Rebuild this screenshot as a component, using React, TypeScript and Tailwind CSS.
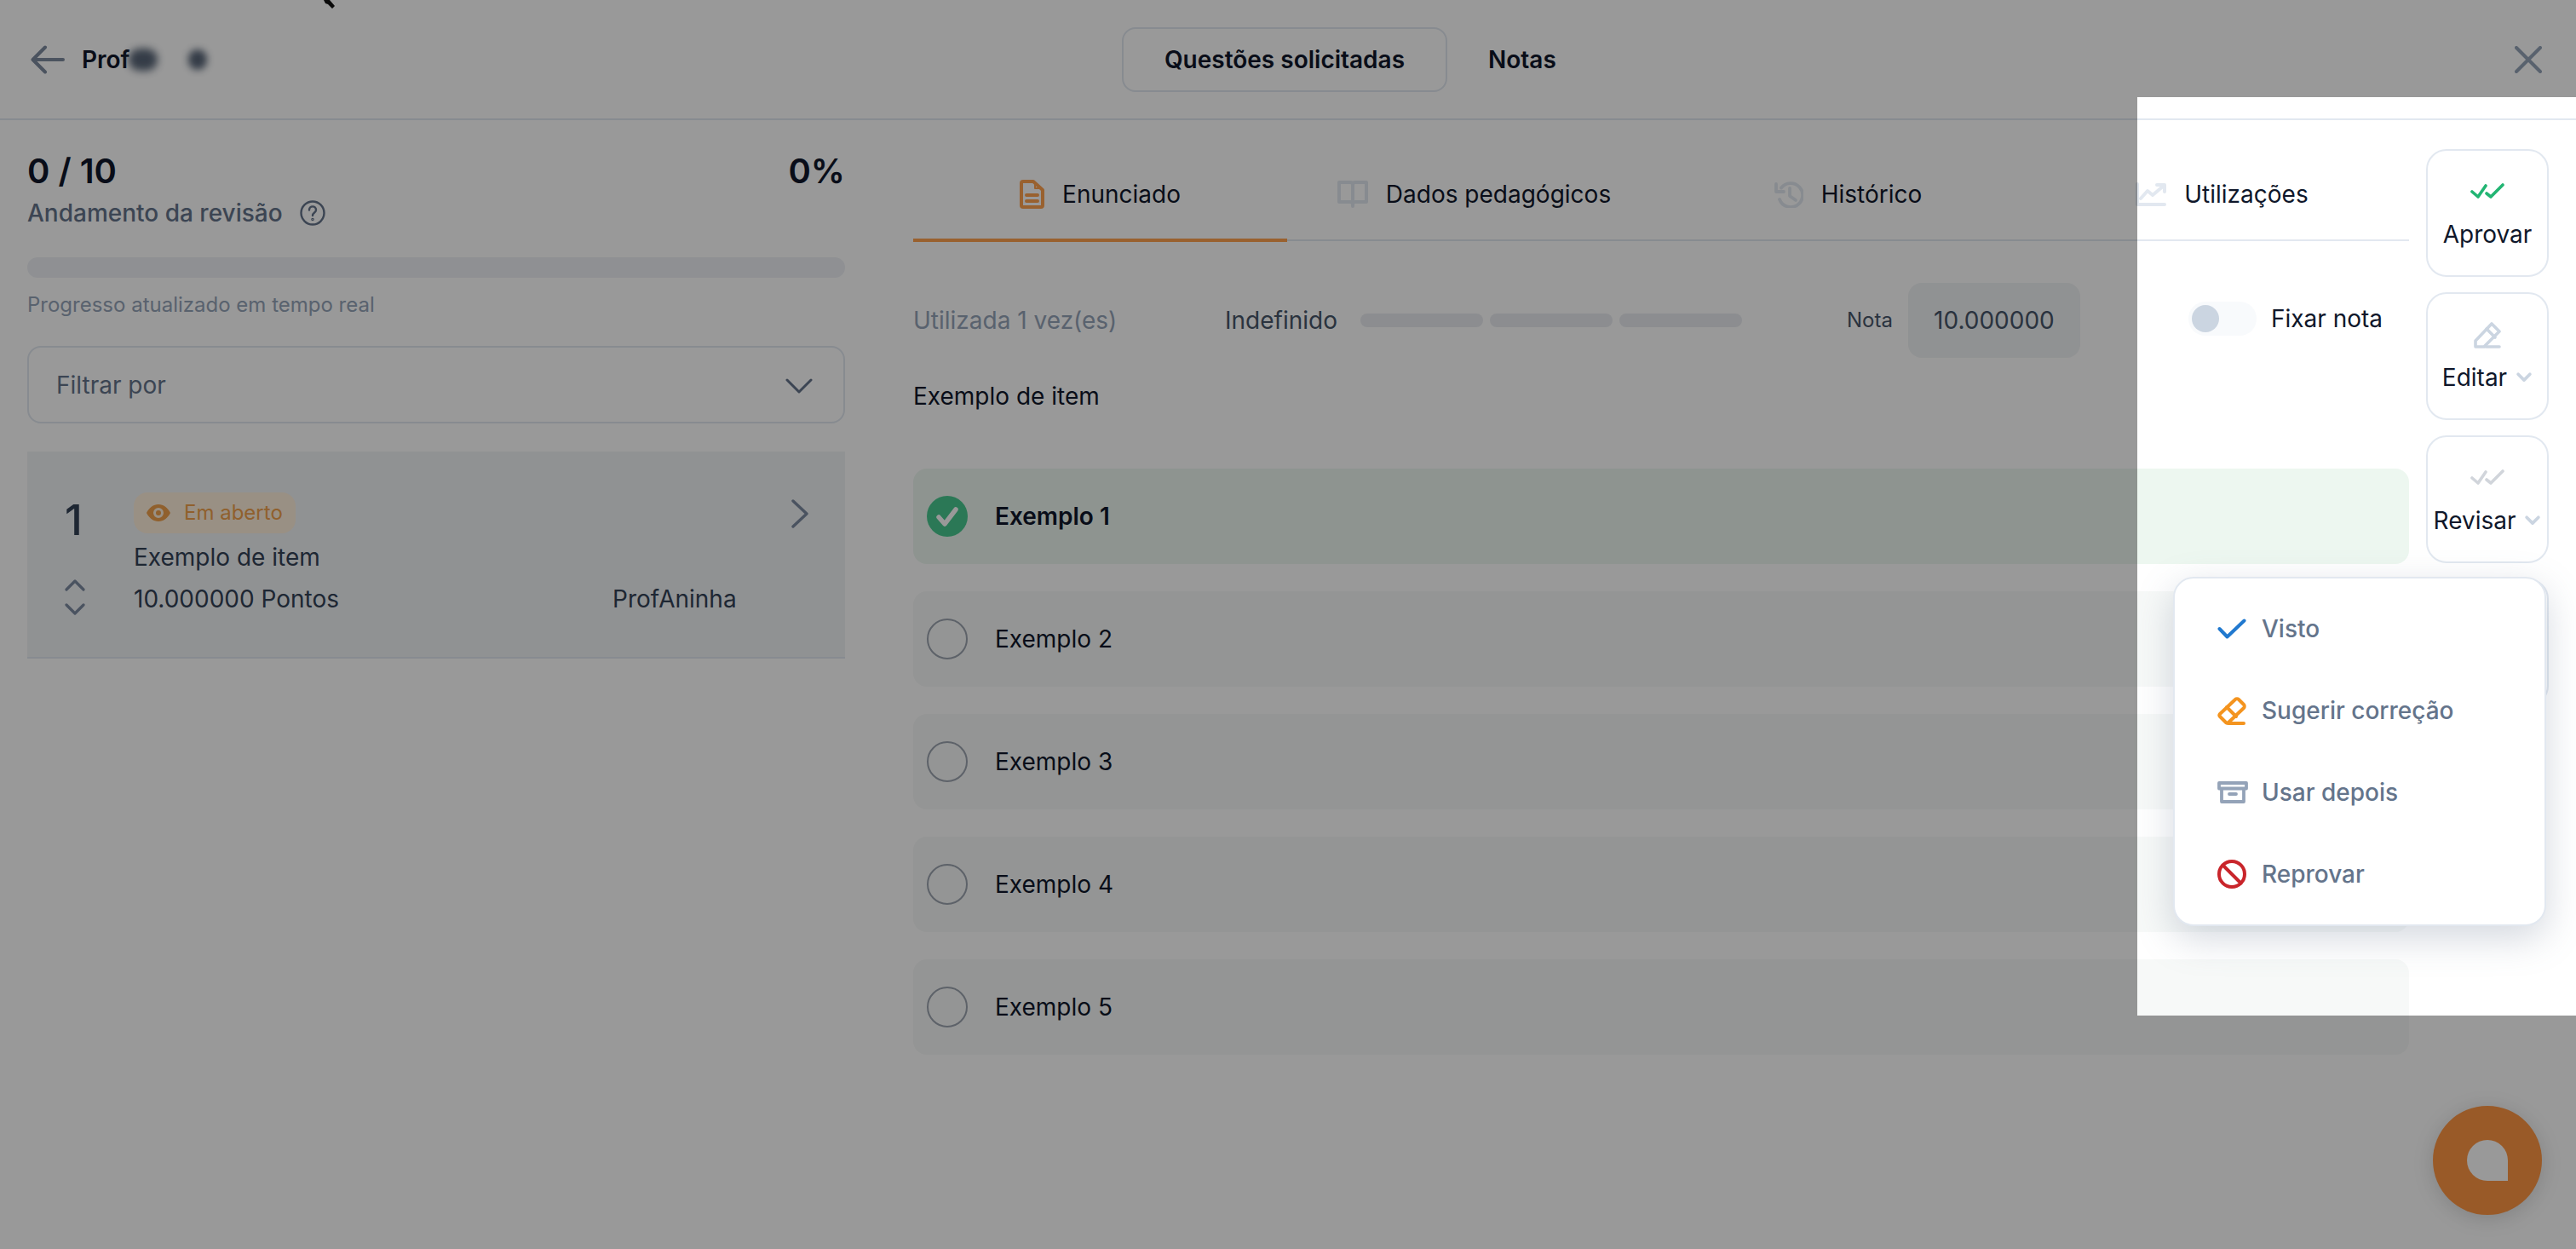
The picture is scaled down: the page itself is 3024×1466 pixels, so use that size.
import React from "react";

function Back() {
  return (
    <svg width="40" height="34" viewBox="0 0 40 34" fill="none" stroke="#7d8a9e" strokeWidth="4" strokeLinecap="round" strokeLinejoin="round">
      <path d="M17 2.5 2.5 17 17 31.5M2.5 17H38" />
    </svg>
  );
}
function Close() {
  return (
    <svg width="32" height="32" viewBox="0 0 32 32" fill="none" stroke="#94a3b8" strokeWidth="4" strokeLinecap="round">
      <path d="M2 2l28 28M30 2 2 30" />
    </svg>
  );
}
function Chevron({ d, size = 32, color = "#94a3b8", w = 3.5 }: { d: string; size?: number; color?: string; w?: number }) {
  return (
    <svg width={size} height={size} viewBox="0 0 32 32" fill="none" stroke={color} strokeWidth={w} strokeLinecap="round" strokeLinejoin="round">
      <path d={d} />
    </svg>
  );
}
function DoubleCheck({ color }: { color: string }) {
  return (
    <svg width="40" height="20" viewBox="0 0 40 20" fill="none" stroke={color} strokeWidth="3.6" strokeLinecap="round" strokeLinejoin="round">
      <path d="M2 10l7 6 9-13" />
      <path d="M19 12l5 4L38 2" />
    </svg>
  );
}
function Pencil() {
  return (
    <svg width="32" height="32" viewBox="0 0 32 32" fill="none" stroke="#cbd5e1" strokeWidth="3.6" strokeLinecap="round" strokeLinejoin="round">
      <path d="M2 23 21 3l9 9-18 18H2z" />
      <path d="M15 9l10 10M14 30h16" />
    </svg>
  );
}
function DocIcon() {
  return (
    <svg width="29" height="34" viewBox="0 0 29 34" fill="none" stroke="#ffa24f" strokeWidth="4" strokeLinejoin="round" strokeLinecap="round">
      <path d="M2 4a2 2 0 0 1 2-2h12l11 10v18a2 2 0 0 1-2 2H4a2 2 0 0 1-2-2z" />
      <path d="M8 18h13M8 25h13" />
      <path d="M18 4v6h7" strokeWidth="2" />
    </svg>
  );
}
function BookIcon() {
  return (
    <svg width="36" height="32" viewBox="0 0 36 32" fill="none" stroke="#e2e8f0" strokeWidth="4" strokeLinejoin="round" strokeLinecap="round">
      <path d="M18 5c0-2-1-3-3-3H2v23h13c2 0 3 1 3 3 0-2 1-3 3-3h13V2H21c-2 0-3 1-3 3z" />
      <path d="M18 5v25" />
    </svg>
  );
}
function HistoryIcon() {
  return (
    <svg width="34" height="32" viewBox="0 0 34 32" fill="none" stroke="#e2e8f0" strokeWidth="3.8" strokeLinecap="round" strokeLinejoin="round">
      <path d="M8 8.5A14 14 0 1 1 6 22" />
      <path d="M2 4v9h9" />
      <path d="M18 9v9l7 5" />
    </svg>
  );
}
function ChartIcon() {
  return (
    <svg width="36" height="28" viewBox="0 0 36 28" fill="none" stroke="#e2e8f0" strokeWidth="4" strokeLinecap="round" strokeLinejoin="round">
      <path d="M2 2v24h32" />
      <path d="M6 19l8-9 6 5 13-11" />
      <path d="M25 3h9v8" />
    </svg>
  );
}
function MenuIcon({ kind }: { kind: string }) {
  if (kind === "check")
    return (
      <svg width="34" height="24" viewBox="0 0 34 24" fill="none" stroke="#2179cf" strokeWidth="4" strokeLinecap="round" strokeLinejoin="round">
        <path d="M2.5 12l9 9.5L31.5 2.5" />
      </svg>
    );
  if (kind === "eraser")
    return (
      <svg width="34" height="33" viewBox="0 0 34 33" fill="none" stroke="#f4941f" strokeWidth="4" strokeLinecap="round" strokeLinejoin="round">
        <path d="M3 20 21 3c1-1 3-1 4 0l6 6c1 1 1 3 0 4L13 30c-1 1-2 1-3 0l-7-7c-1-1-1-2 0-3z" />
        <path d="M11 12l11 11M13 31h18" />
      </svg>
    );
  if (kind === "box")
    return (
      <svg width="36" height="26" viewBox="0 0 36 26" fill="none" stroke="#94a3b8" strokeWidth="3.8" strokeLinecap="round" strokeLinejoin="round">
        <path d="M2 2h32v6.5H2zM5 8.5V24h26V8.5M14 15h8" />
      </svg>
    );
  return (
    <svg width="34" height="34" viewBox="0 0 34 34" fill="none" stroke="#c9252b" strokeWidth="4" strokeLinecap="round">
      <circle cx="17" cy="17" r="15" />
      <path d="M6.5 6.5l21 21" />
    </svg>
  );
}

const tabs = [
  { label: "Enunciado", icon: <DocIcon />, active: true },
  { label: "Dados pedagógicos", icon: <BookIcon /> },
  { label: "Histórico", icon: <HistoryIcon /> },
  { label: "Utilizações", icon: <ChartIcon /> },
];

function ActionButton({ icon, label, chevron }: { icon: React.ReactNode; label?: string; chevron?: boolean }) {
  return (
    <div className="flex h-[150px] w-[144px] flex-col items-center justify-center gap-[18px] rounded-[24px] border-2 border-[#e2e8f0] bg-white">
      <div className="flex h-[32px] items-center justify-center">{icon}</div>
      {label && (
        <div className="flex h-[32px] items-center gap-[10px] text-[28px] text-[#0f172a]">
          <span>{label}</span>
          {chevron && <Chevron d="M5 10l11 11 11-11" size={20} color="#cbd5e1" w={6} />}
        </div>
      )}
    </div>
  );
}

export default function App() {
  return (
    <div className="relative h-[1466px] w-[3024px] overflow-hidden bg-white text-[#0f172a] [font-family:Inter,sans-serif]">
      <header className="flex h-[141px] items-center border-b-2 border-[#e2e8f0] pl-[36px] pr-[40px]">
        <div className="flex w-[1281px] items-center gap-[20px]">
          <Back />
          <div className="relative flex items-center text-[28px] font-semibold">
            <span>Prof</span>
            <span className="ml-[-2px] h-[26px] w-[34px] rounded-full bg-[#475569] opacity-90 blur-[5px]" />
            <span className="ml-[36px] h-[24px] w-[22px] rounded-full bg-[#475569] opacity-90 blur-[4px]" />
          </div>
        </div>
        <div className="flex items-center gap-[48px] text-[28px] font-semibold">
          <div className="flex h-[76px] w-[382px] items-center justify-center rounded-[16px] border-2 border-[#e2e8f0]">
            Questões solicitadas
          </div>
          <div>Notas</div>
        </div>
        <div className="ml-auto">
          <Close />
        </div>
      </header>

      <main className="flex gap-[80px] px-[32px]">
        <aside className="w-[960px] shrink-0">
          <div className="mt-[36px] flex items-center justify-between text-[40px] font-semibold leading-[48px]">
            <span>0 / 10</span>
            <span>0%</span>
          </div>
          <div className="mt-[7px] flex h-[36px] items-center gap-[20px] text-[28px] font-medium text-[#64748b]">
            <span>Andamento da revisão</span>
            <svg width="30" height="30" viewBox="0 0 30 30" fill="none" stroke="#64748b" strokeWidth="2.4" strokeLinecap="round">
              <circle cx="15" cy="15" r="13.5" />
              <path d="M11 11.5c0-5.5 8-5.5 8 0 0 3-4 3-4 6.5" />
              <circle cx="15" cy="22.5" r="0.6" />
            </svg>
          </div>
          <div className="mt-[34px] h-[24px] rounded-full bg-[#eef1f5]" />
          <div className="mt-[16px] text-[24px] leading-[32px] text-[#94a3b8]">Progresso atualizado em tempo real</div>
          <div className="mt-[32px] flex h-[91px] items-center justify-between rounded-[16px] border-2 border-[#e2e8f0] pl-[32px] pr-[36px] text-[28px] text-[#64748b]">
            <span>Filtrar por</span>
            <Chevron d="M2 10l14 14 14-14" size={32} color="#64748b" w={3} />
          </div>
          <div className="mt-[33px] flex h-[243px] border-b-2 border-[#e2e8f0] bg-[#f1f3f6] pl-[44px] pt-[48px]">
            <div className="flex w-[81px] shrink-0 flex-col">
              <div className="text-[50px] font-medium leading-[64px] text-[#334155]">1</div>
              <div className="mt-[38px] flex flex-col gap-[14px]">
                <svg width="24" height="14" viewBox="0 0 24 14" fill="none" stroke="#7c8aa0" strokeWidth="3.2" strokeLinecap="round" strokeLinejoin="round">
                  <path d="M2 12 12 2l10 10" />
                </svg>
                <svg width="24" height="14" viewBox="0 0 24 14" fill="none" stroke="#7c8aa0" strokeWidth="3.2" strokeLinecap="round" strokeLinejoin="round">
                  <path d="M2 2l10 10L22 2" />
                </svg>
              </div>
            </div>
            <div className="flex-1">
              <div className="flex items-start justify-between pr-[42px]">
                <div className="flex h-[48px] w-[190px] items-center gap-[16px] rounded-[16px] bg-[#fff0dc] pl-[15px] text-[24px] text-[#f0a04b]">
                  <svg width="28" height="20" viewBox="0 0 28 20" fill="#f0a04b">
                    <path fillRule="evenodd" d="M14 0C8 0 3 4 0 10c3 6 8 10 14 10s11-4 14-10C25 4 20 0 14 0zm0 4a6 6 0 1 1 0 12 6 6 0 0 1 0-12z" />
                    <circle cx="14" cy="10" r="3" />
                  </svg>
                  <span>Em aberto</span>
                </div>
                <svg className="mt-[8px]" width="22" height="34" viewBox="0 0 22 34" fill="none" stroke="#7c8aa0" strokeWidth="3.4" strokeLinecap="round" strokeLinejoin="round">
                  <path d="M3 2l16 15L3 32" />
                </svg>
              </div>
              <div className="mt-[10px] text-[28px] leading-[36px] text-[#334155]">Exemplo de item</div>
              <div className="mt-[13px] flex text-[28px] leading-[36px] text-[#334155]">
                <span className="w-[562px]">10.000000 Pontos</span>
                <span>ProfAninha</span>
              </div>
            </div>
          </div>
        </aside>

        <section className="flex-1 pt-[35px]">
          <div className="flex h-[107px] border-b-2 border-[#e2e8f0]">
            {tabs.map((t) => (
              <div
                key={t.label}
                className={`flex h-[108px] flex-1 items-center justify-center gap-[21px] border-b-4 text-[28px] ${
                  t.active ? "border-[#ffa24f]" : "border-transparent"
                }`}
              >
                {t.icon}
                <span>{t.label}</span>
              </div>
            ))}
          </div>
          <div className="mt-[49px] flex h-[88px] items-center text-[28px]">
            <span className="w-[366px] text-[#94a3b8]">Utilizada 1 vez(es)</span>
            <span className="w-[159px] text-[#475569]">Indefinido</span>
            <div className="flex gap-[8px]">
              <span className="h-[16px] w-[144px] rounded-full bg-[#e9ecf1]" />
              <span className="h-[16px] w-[144px] rounded-full bg-[#e9ecf1]" />
              <span className="h-[16px] w-[144px] rounded-full bg-[#e9ecf1]" />
            </div>
            <span className="ml-[123px] text-[24px] text-[#475569]">Nota</span>
            <div className="ml-[18px] flex h-[88px] w-[202px] items-center justify-center rounded-[16px] bg-[#f1f3f5] text-[#475569]">
              10.000000
            </div>
            <div className="mb-[4px] ml-[127px] flex h-[40px] w-[80px] items-center rounded-full bg-[#f8fafc] pl-[4px]">
              <span className="h-[32px] w-[32px] rounded-full bg-[#cbd5e1]" />
            </div>
            <span className="mb-[4px] ml-[17px]">Fixar nota</span>
          </div>
          <div className="mt-[27px] text-[28px] leading-[36px]">Exemplo de item</div>
          <div className="mt-[67px] flex flex-col gap-[32px]">
            {[1, 2, 3, 4, 5].map((n) => (
              <div
                key={n}
                className={`flex h-[112px] items-center gap-[32px] rounded-[16px] pl-[16px] text-[28px] ${
                  n === 1 ? "bg-[#edf7f0] font-semibold" : "bg-[#f7f9f8]"
                }`}
              >
                {n === 1 ? (
                  <svg width="48" height="48" viewBox="0 0 48 48">
                    <circle cx="24" cy="24" r="24" fill="#48c98f" />
                    <path d="M14 25l7 8 13-17" fill="none" stroke="#fff" strokeWidth="5.5" strokeLinecap="round" strokeLinejoin="round" />
                  </svg>
                ) : (
                  <span className="h-[48px] w-[48px] rounded-full border-2 border-[#9ca3af]" />
                )}
                <span>Exemplo {n}</span>
              </div>
            ))}
          </div>
        </section>

        <div className="ml-[-60px] mt-[34px] flex w-[144px] shrink-0 flex-col gap-[18px]">
          <ActionButton icon={<DoubleCheck color="#22b573" />} label="Aprovar" />
          <ActionButton icon={<Pencil />} label="Editar" chevron />
          <ActionButton icon={<DoubleCheck color="#d1d5db" />} label="Revisar" chevron />
          <ActionButton icon={null} />
        </div>
      </main>

      <div className="absolute left-[2551px] top-[677px] flex h-[410px] w-[438px] flex-col justify-center gap-[64px] rounded-[24px] border-2 border-[#e2e8f0] bg-white pl-[50px] text-[28px] font-medium leading-[32px] text-[#64748b] shadow-[0_14px_44px_rgba(100,116,139,0.28)]">
        {[
          ["check", "Visto"],
          ["eraser", "Sugerir correção"],
          ["box", "Usar depois"],
          ["ban", "Reprovar"],
        ].map(([k, l]) => (
          <div key={l} className="flex h-[32px] items-center">
            <div className="flex w-[52px] shrink-0 justify-start">
              <MenuIcon kind={k} />
            </div>
            <span>{l}</span>
          </div>
        ))}
      </div>

      <div className="absolute left-[2856px] top-[1298px] flex h-[128px] w-[128px] items-center justify-center rounded-full bg-[#ff9643] shadow-[0_4px_24px_rgba(0,0,0,0.15)]">
        <span className="h-[48px] w-[48px] rounded-l-full rounded-tr-full bg-white" />
      </div>

      <svg className="absolute left-[380px] top-0" width="14" height="11" viewBox="0 0 14 11" fill="#111">
        <path d="M0 0h7l6 7-3 3-5-5-3-1z" />
      </svg>

      <div className="pointer-events-none absolute left-[2509px] top-[114px] h-[1078px] w-[515px] shadow-[0_0_0_4000px_rgba(0,0,0,0.4)]" />
    </div>
  );
}
